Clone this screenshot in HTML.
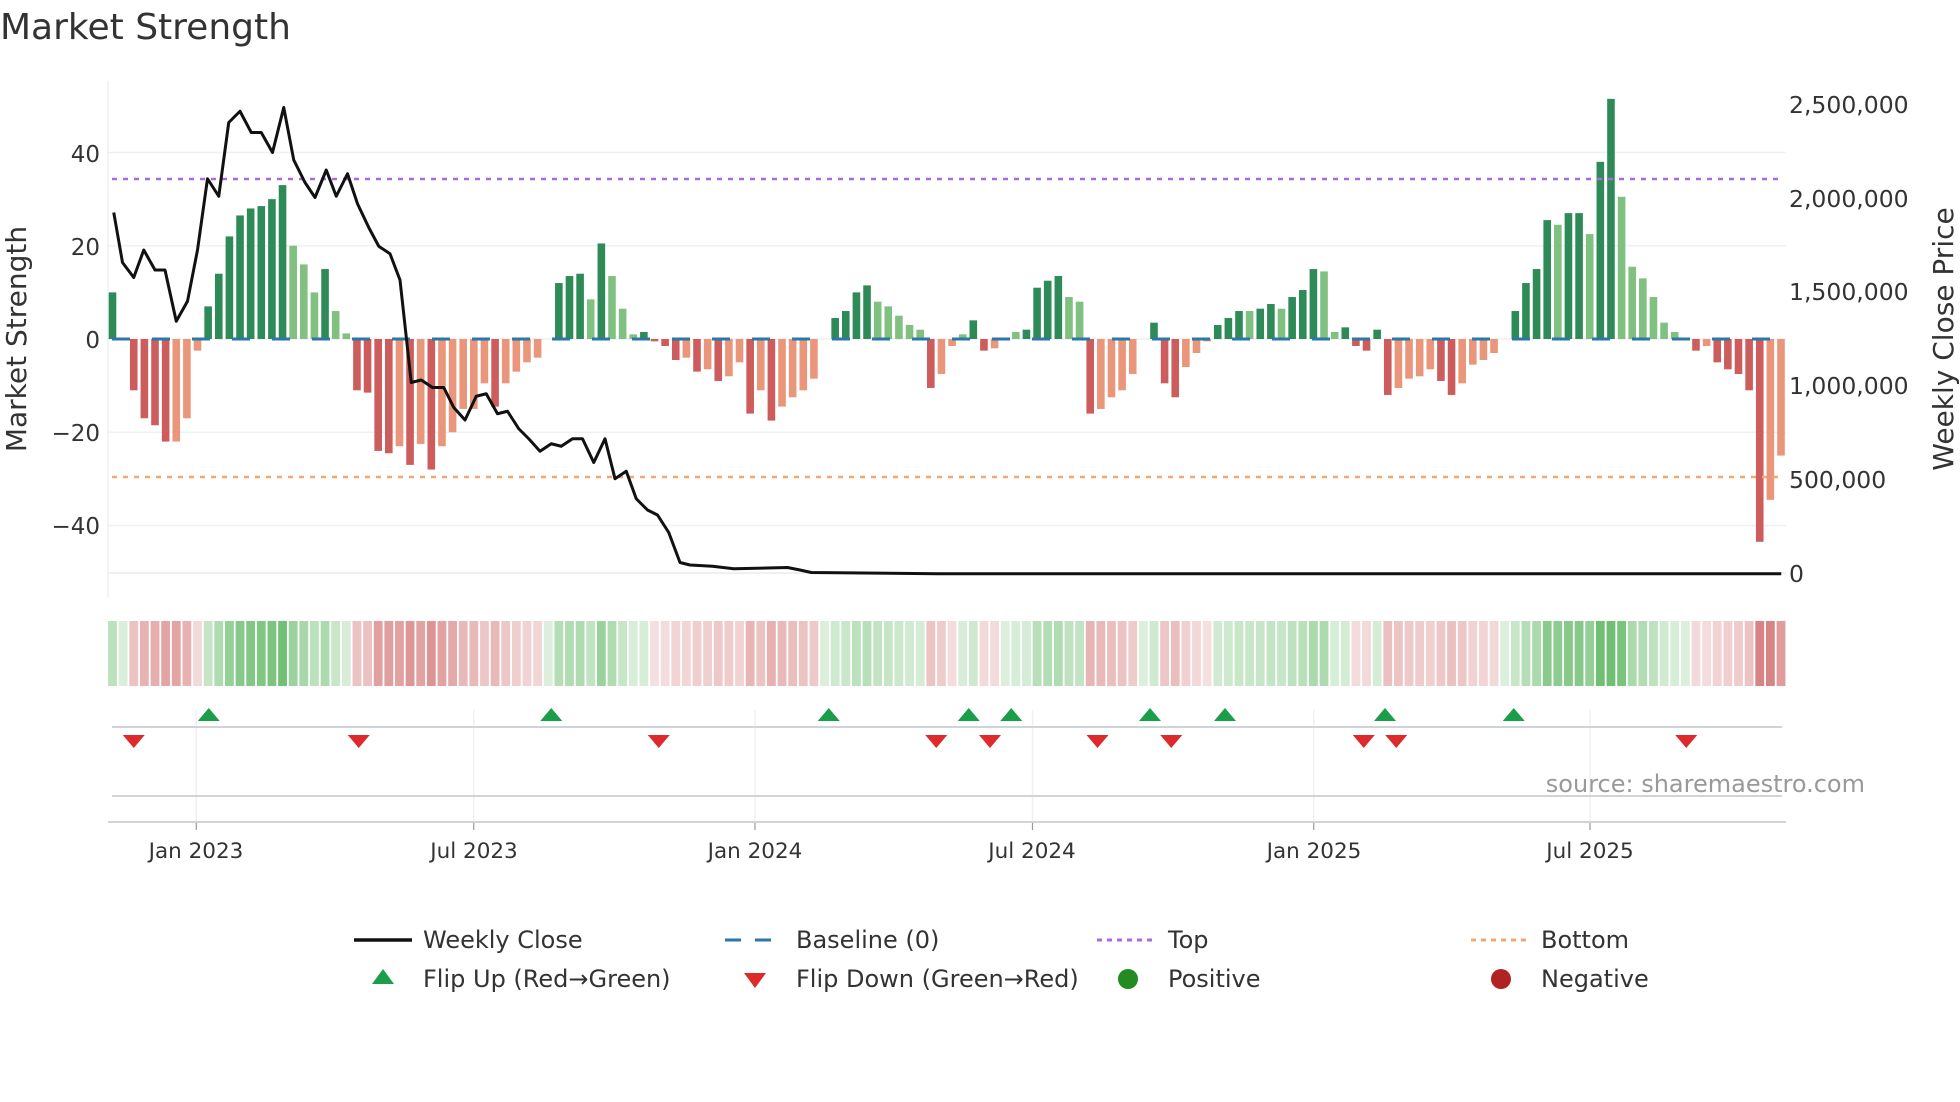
<!DOCTYPE html>
<html><head><meta charset="utf-8">
<style>
html,body{margin:0;padding:0;background:#fff;width:1960px;height:1102px;overflow:hidden;}
svg{display:block;font-family:"DejaVu Sans","Liberation Sans",sans-serif;}
</style></head>
<body>
<svg id="s" width="1960" height="1102" viewBox="0 0 1960 1102" xmlns="http://www.w3.org/2000/svg">
<text x="0" y="39" font-size="36" fill="#333">Market Strength</text>
<g id="g"></g>
<text transform="translate(26,339) rotate(-90)" text-anchor="middle" font-size="28" fill="#333">Market Strength</text>
<text transform="translate(1953,339) rotate(-90)" text-anchor="middle" font-size="28" fill="#333">Weekly Close Price</text>
<g font-size="23" fill="#333" text-anchor="end">
<text x="100" y="162">40</text><text x="100" y="255">20</text><text x="100" y="348">0</text><text x="100" y="441">−20</text><text x="100" y="534">−40</text>
</g>
<g font-size="23.5" fill="#333">
<text x="1789" y="113">2,500,000</text><text x="1789" y="207">2,000,000</text><text x="1789" y="300">1,500,000</text><text x="1789" y="394">1,000,000</text><text x="1789" y="488">500,000</text><text x="1789" y="582">0</text>
</g>
<g font-size="21.5" fill="#333" text-anchor="middle">
<text x="196" y="858">Jan 2023</text><text x="474" y="858">Jul 2023</text><text x="755" y="858">Jan 2024</text><text x="1032" y="858">Jul 2024</text><text x="1314" y="858">Jan 2025</text><text x="1590" y="858">Jul 2025</text>
</g>
<text x="1865" y="792" text-anchor="end" font-size="24" fill="#999">source: sharemaestro.com</text>
<g font-size="24" fill="#333">
<line x1="354" y1="940" x2="412" y2="940" stroke="#111" stroke-width="3.5"/>
<text x="423" y="948">Weekly Close</text>
<line x1="725" y1="940" x2="780" y2="940" stroke="#2a77a8" stroke-width="3" stroke-dasharray="16,14"/>
<text x="796" y="948">Baseline (0)</text>
<line x1="1097" y1="940" x2="1152" y2="940" stroke="#a86be0" stroke-width="3" stroke-dasharray="5,5"/>
<text x="1168" y="948">Top</text>
<line x1="1471" y1="940" x2="1526" y2="940" stroke="#f0a870" stroke-width="3" stroke-dasharray="5,5"/>
<text x="1541" y="948">Bottom</text>
<polygon points="383,969 372,984 394,984" fill="#1a9e4a"/>
<text x="423" y="987">Flip Up (Red→Green)</text>
<polygon points="744,973 766,973 755,988" fill="#dd2a2a"/>
<text x="796" y="987">Flip Down (Green→Red)</text>
<circle cx="1128" cy="979" r="10" fill="#228b22"/>
<text x="1168" y="987">Positive</text>
<circle cx="1501" cy="979" r="10" fill="#b22222"/>
<text x="1541" y="987">Negative</text>
</g>
</svg>
<script>
var V=[10,'d',0.3,'d',-11,'d',-17,'d',-18.5,'d',-22,'d',-22,'l',-17,'l',-2.5,'l',7,'d',14,'d',22,'d',26.5,'d',28,'d',28.5,'d',30,'d',33,'d',20,'l',16,'l',10,'l',15,'d',6,'l',1.2,'l',-11,'d',-11.5,'d',-24,'d',-24.5,'d',-23,'l',-27,'d',-22.5,'l',-28,'d',-23,'l',-20,'l',-15,'l',-15,'l',-9.5,'l',-14.5,'d',-9.5,'l',-7,'l',-5,'l',-4,'l',0,'d',12,'d',13.5,'d',14,'d',8.5,'l',20.5,'d',13.5,'l',6.5,'l',1,'l',1.5,'d',-0.5,'d',-1.5,'d',-4.5,'d',-4,'l',
-7,'d',-6.5,'l',-9,'d',-8,'l',-5,'l',-16,'d',-11,'l',-17.5,'d',-14.5,'l',-12.5,'l',-11,'l',-8.5,'l',0,'d',4.5,'d',6,'d',10,'d',11.5,'d',8,'l',7,'l',5,'l',3,'l',2,'l',-10.5,'d',-7.5,'l',-1.5,'l',1,'l',4,'d',-2.5,'d',-2,'l',0,'d',1.5,'l',2,'d',11,'d',12.5,'d',13.5,'d',9,'l',8,'l',-16,'d',-15,'l',-12.5,'l',-11,'l',-7.5,'l',0,'d',3.5,'d',-9.5,'d',-12.5,'d',-6,'l',-3,'l',-0.5,'l',3,'d',4.5,'d',6,'d',6,'l',6.5,'d',7.5,'d',6.5,'l',9,'d',10.5,'d',15,'d',14.5,'l',1.5,'l',2.5,'d',-1.5,'d',-2.5,'d',2,'d',-12,'d',-10.5,'l',-8.5,'l',-8,'l',-6.5,'l',-9,'d',-12,'d',-9.5,'l',-5.5,'l',-4.5,'l',-3,'l',0,'d',6,'d',12,'d',15,'d',25.5,'d',24.5,'l',27,'d',27,'d',22.5,'l',38,'d',51.5,'d',30.5,'l',15.5,'l',13,'l',9,'l',3.5,'l',1.5,'l',0,'d',-2.5,'d',-1.5,'l',-5,'d',-6.5,'d',-7.5,'d',-11,'d',-43.5,'d',-34.5,'l',-25,'l'];
var N=V.length/2,x0=112.5,x1=1781,sp=(x1-x0)/(N-1);
function yS(v){return 339-v*4.6625;}
var h='';
[40,20,0,-20,-40].forEach(function(v){h+='<line x1="108" x2="1786" y1="'+yS(v)+'" y2="'+yS(v)+'" stroke="#eef0f5" stroke-width="1.5"/>';});
h+='<line x1="108" x2="1786" y1="573" y2="573" stroke="#e8ebf0" stroke-width="1.5"/>';
h+='<line x1="108" x2="108" y1="81" y2="598" stroke="#eef0f5" stroke-width="1.5"/>';
for(var i=0;i<N;i++){var v=V[2*i],t=V[2*i+1],x=x0+i*sp;
 var c=v>=0?(t=='d'?'#2e8b57':'#80c080'):(t=='d'?'#cd5c5c':'#e9967a');
 var y=Math.min(yS(v),339),hh=Math.abs(v*4.6625);
 if(hh>0.5)h+='<rect x="'+(x-3.8)+'" y="'+y+'" width="7.6" height="'+hh+'" fill="'+c+'"/>';
}
h+='<line x1="112" x2="1783" y1="339" y2="339" stroke="#2a77a8" stroke-width="3" stroke-dasharray="18,22"/>';
h+='<line x1="112" x2="1783" y1="179" y2="179" stroke="#a86be0" stroke-width="2.5" stroke-dasharray="5,6"/>';
h+='<line x1="112" x2="1783" y1="477" y2="477" stroke="#f0a870" stroke-width="2.5" stroke-dasharray="5,6"/>';
var P=[[91,170],[98,210],[107,222],[115,200],[124,216],[132,216],[141,257],[150,241],[158,200],[166,143],[175,157],[183,98],[192,89],[201,106],[209,106],[218,122],[227,86],[235,128],[244,146],[252,158],[261,136],[269,157],[278,139],[286,163],[295,182],[303,197],[312,203],[320,224],[329,306],[337,304],[346,310],[355,310],[363,326],[372,336],[381,317],[389,315],[398,331],[406,329],[415,343],[423,351],[432,361],[441,355],[449,357],[458,351],[466,351],[475,370],[484,351],[492,383],[501,377],[509,399],[518,408],[526,412],[535,426],[544,450],[552,452],[570,453],[587,455],[630,454],[640,456],[649,458],[750,459],[1425,459]];
h+='<polyline fill="none" stroke="#111" stroke-width="3" stroke-linejoin="round" points="'+P.map(function(p){return (p[0]*1.25)+','+(p[1]*1.25);}).join(' ')+'"/>';
for(var i=0;i<N;i++){var v=V[2*i],x=x0+i*sp,a=Math.min(1,0.25+Math.abs(v)/45);
 var c=v>=0?'rgba(76,175,80,'+a*0.8+')':'rgba(200,80,80,'+a*0.7+')';
 h+='<rect x="'+(x-sp/2+0.9)+'" y="621" width="'+(sp-1.8)+'" height="65" fill="'+c+'"/>';}
[157,379,604,826,1051,1272].forEach(function(d){var x=d*1.25;h+='<line x1="'+x+'" x2="'+x+'" y1="710" y2="822" stroke="#eef0f5" stroke-width="1.5"/><line x1="'+x+'" x2="'+x+'" y1="822" y2="830" stroke="#999" stroke-width="1.2"/>';});
h+='<line x1="112" x2="1782" y1="727" y2="727" stroke="#d0d3d8" stroke-width="2"/>';
h+='<line x1="112" x2="1782" y1="796" y2="796" stroke="#d0d3d8" stroke-width="2"/>';
h+='<line x1="108" x2="1786" y1="822" y2="822" stroke="#d0d3d8" stroke-width="2"/>';
[167,441,663,775,809,920,980,1108,1211].forEach(function(d){var x=d*1.25;h+='<polygon points="'+x+',708 '+(x-11)+',721 '+(x+11)+',721" fill="#1a9e4a"/>';});
[107,287,527,749,792,878,937,1091,1117,1349].forEach(function(d){var x=d*1.25;h+='<polygon points="'+(x-11)+',735 '+(x+11)+',735 '+x+',748" fill="#dd2a2a"/>';});
document.getElementById('g').innerHTML=h;
</script>
</body></html>
